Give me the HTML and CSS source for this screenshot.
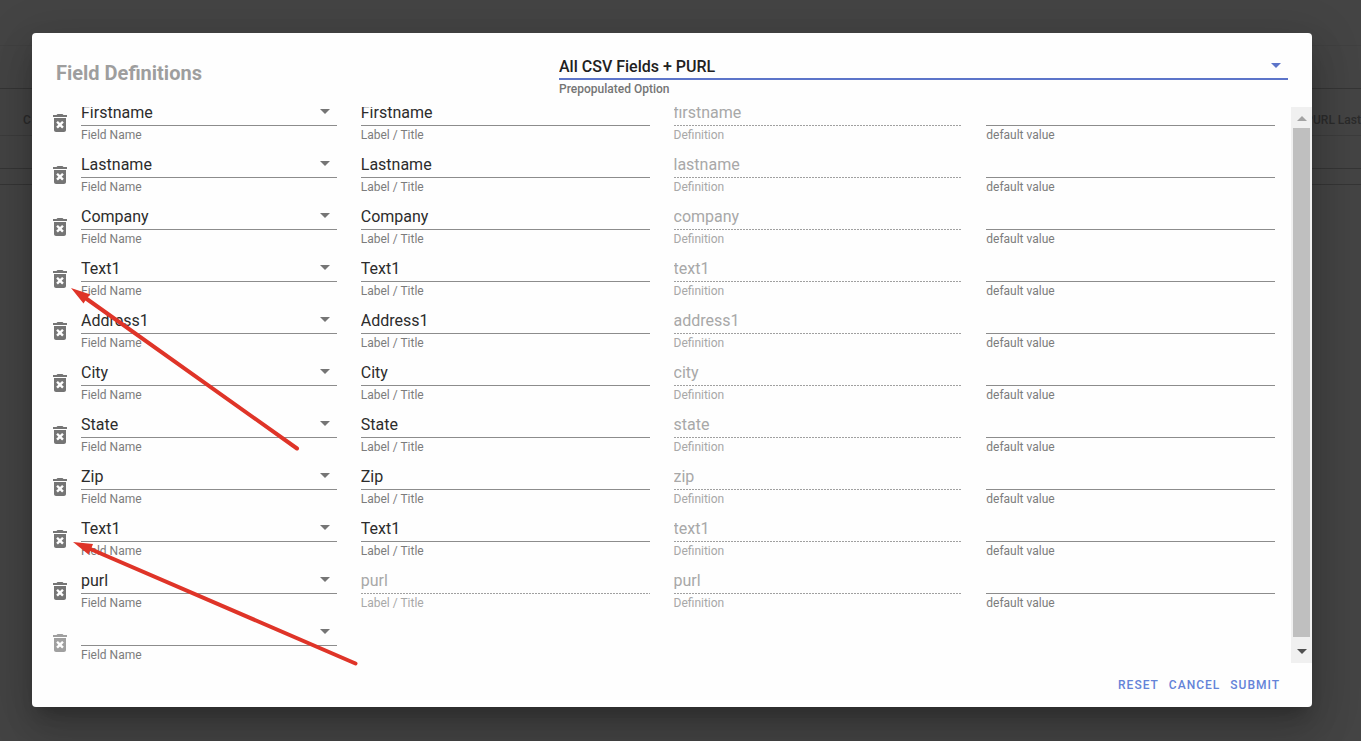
FILE: index.html
```html
<!DOCTYPE html>
<html lang="en">
<head>
    <meta charset="UTF-8">
    <meta name="viewport" content="width=device-width, initial-scale=1.0">
    <title>Field Definitions</title>
    <link rel="stylesheet" href="styles.css">
</head>
<body>
<div class="page">
    <div class="page-bar"></div>
    <div class="page-tabs"></div>
    <div class="page-head"><span>C</span><span>PURL Last</span></div>
    <div class="page-row"></div>
    <div class="page-foot"></div>
</div>

<div class="overlay">
    <form class="dialog" role="dialog" aria-labelledby="dialogTitle">
        <header class="dialog-header">
            <h1 id="dialogTitle">Field Definitions</h1>
            <div class="field field-main">
                <div class="select-wrap">
                    <select id="prepopulated">
                        <option>All CSV Fields + PURL</option>
                    </select>
                    <svg class="caret" viewBox="0 0 10 5"><path d="M0 0h10L5 5z"/></svg>
                </div>
                <label for="prepopulated">Prepopulated Option</label>
            </div>
        </header>

        <div class="dialog-content">
            <div class="rows" id="rows"></div>
            <div class="scrollbar">
                <svg class="scroll-up" viewBox="0 0 10 5"><path d="M0 5h10L5 0z"/></svg>
                <div class="thumb"></div>
                <svg class="scroll-down" viewBox="0 0 10 5"><path d="M0 0h10L5 5z"/></svg>
            </div>
        </div>

        <footer class="dialog-actions">
            <button type="reset">RESET</button>
            <button type="button">CANCEL</button>
            <button type="submit">SUBMIT</button>
        </footer>
    </form>
</div>

<svg class="arrows" width="400" height="700" viewBox="0 0 400 700">
    <path class="shaft" d="M84 297L297 448.500"/>
    <path d="M71 288L90.500 294.500L87 298L83.500 303.500z"/>
    <path class="shaft" d="M88 548L355.500 663.500"/>
    <path d="M73 542L93 544L91 549L88.500 554.500z"/>
</svg>

<script>
    const fields = [
        { name: 'Firstname', definition: 'firstname' },
        { name: 'Lastname', definition: 'lastname' },
        { name: 'Company', definition: 'company' },
        { name: 'Text1', definition: 'text1' },
        { name: 'Address1', definition: 'address1' },
        { name: 'City', definition: 'city' },
        { name: 'State', definition: 'state' },
        { name: 'Zip', definition: 'zip' },
        { name: 'Text1', definition: 'text1' },
        { name: 'purl', definition: 'purl', locked: true },
        { name: '' }
    ];

    function textField(id, value, label, disabled) {
        return `<div class="field">
            <input type="text" id="${id}" value="${value}" ${disabled ? 'disabled' : ''}>
            <label for="${id}">${label}</label>
        </div>`;
    }

    document.getElementById('rows').innerHTML = fields.map((field, i) => `
        <div class="row">
            <button type="button" class="delete" aria-label="Delete" ${field.name ? '' : 'disabled'}>
                <svg viewBox="0 0 24 24"><path d="M6 19c0 1.100.9 2 2 2h8c1.100 0 2-.9 2-2V7H6v12zM8.200 11.600l1.700-1.700L12 12l2.100-2.100 1.700 1.700L13.700 13.700l2.100 2.100-1.700 1.700L12 15.400l-2.100 2.100-1.700-1.700 2.100-2.100zM15.500 4l-1-1h-5l-1 1H5v2h14V4z"/></svg>
            </button>
            <div class="row-fields">
                <div class="field">
                    <div class="select-wrap">
                        <select id="name${i}"><option>${field.name}</option></select>
                        <svg class="caret" viewBox="0 0 10 5"><path d="M0 0h10L5 5z"/></svg>
                    </div>
                    <label for="name${i}">Field Name</label>
                </div>
                ${field.name ? textField('label' + i, field.name, 'Label / Title', field.locked)
                    + textField('definition' + i, field.definition, 'Definition', true)
                    + textField('default' + i, '', 'default value', false) : ''}
            </div>
        </div>`).join('');
</script>
</body>
</html>
```
FILE: styles.css
```css
* {
    box-sizing: border-box;
}
body {
    margin: 0;
    height: 100vh;
    overflow: hidden;
    background-color: #444;
    font-family: Roboto, "Liberation Sans", sans-serif;
}

/* Dimmed page behind the dialog */
.page {
    position: absolute;
    inset: 0;
    overflow: hidden;
    color: #2b2b2b;
    font-size: 12px;
    font-weight: 500;
}
.page-bar {
    height: 46px;
    border-bottom: 1px solid #404040;
}
.page-tabs {
    height: 43px;
    border-bottom: 1px solid #353535;
}
.page-head {
    display: flex;
    justify-content: space-between;
    align-items: center;
    height: 47px;
    padding: 16px 0 0 23px;
    border-bottom: 1px solid #3c3c3c;
}
.page-row {
    height: 33px;
    border-bottom: 1px solid #353535;
}
.page-foot {
    height: 16px;
    border-bottom: 1px solid #353535;
}

.overlay {
    position: relative;
    display: flex;
    height: 100vh;
    padding: 33px 49px 34px 32px;
}
.dialog {
    display: flex;
    flex-direction: column;
    flex: 1;
    background: #fefefe;
    border-radius: 4px;
    box-shadow: 0 11px 15px -7px rgba(0, 0, 0, 0.2), 0 24px 38px 3px rgba(0, 0, 0, 0.14), 0 9px 46px 8px rgba(0, 0, 0, 0.12);
}
.dialog-header {
    display: grid;
    grid-template-columns: 503fr 729fr;
    padding: 20px 24px 10px;
}
h1 {
    margin: 0;
    color: #9e9e9e;
    font-size: 20px;
    line-height: 40px;
}

/* Fields */
.field {
    min-width: 0;
}
.field label {
    display: block;
    padding-top: 2px;
    color: #7c7c7c;
    font-size: 12px;
    line-height: 15px;
}
.field input,
.field select {
    display: block;
    width: 100%;
    height: 27px;
    margin: 0;
    padding: 0;
    border: none;
    border-bottom: 1px solid #8c8c8c;
    border-radius: 0;
    outline: none;
    appearance: none;
    background: transparent;
    color: #2c2c2c;
    font-family: inherit;
    font-size: 16px;
}
.field input:disabled {
    padding-bottom: 1px;
    border-bottom: none;
    background: repeating-linear-gradient(to right, #a0a0a0 0 2px, transparent 2px 3px) left bottom / 100% 1px no-repeat;
    color: #a8a8a8;
}
.field input:disabled + label {
    color: #a8a8a8;
}
.select-wrap {
    position: relative;
}
.caret {
    position: absolute;
    top: 10px;
    right: 7px;
    width: 10px;
    height: 5px;
    fill: #757575;
    pointer-events: none;
}
.field-main select {
    padding-top: 2px;
    border-bottom: 2px solid #5c74c9;
    color: #212121;
    font-weight: 500;
}
.field-main label {
    color: #757575;
    font-weight: 500;
}
.field-main .caret {
    fill: #5c74c9;
}

/* The list is scrolled to its end */
.dialog-content {
    display: flex;
    flex: 1;
    min-height: 0;
    overflow: hidden;
}
.rows {
    display: flex;
    flex-direction: column;
    justify-content: flex-end;
    flex: 1;
    padding: 0 16px;
}
.row {
    display: flex;
    flex-shrink: 0;
    gap: 9px;
    padding-top: 8px;
}
.row-fields {
    display: grid;
    grid-template-columns: 256fr 289fr 289fr 289fr;
    column-gap: 24px;
    flex: 1;
}
.delete {
    width: 24px;
    height: 24px;
    margin-top: 12px;
    padding: 0;
    border: none;
    background: none;
    cursor: pointer;
}
.delete svg {
    display: block;
    fill: #757575;
}
.delete:disabled svg {
    fill: #a0a0a0;
}

.scrollbar {
    display: flex;
    flex-direction: column;
    align-items: center;
    width: 21px;
    background: #f0f0f0;
}
.scrollbar svg {
    width: 10px;
    height: 5px;
}
.scroll-up {
    margin: 9px 0 7px;
    fill: #a3a3a3;
}
.scroll-down {
    margin: 12px 0 9px;
    fill: #505050;
}
.thumb {
    flex: 1;
    width: 17px;
    background: #bfbfbf;
}

.dialog-actions {
    display: flex;
    justify-content: flex-end;
    gap: 10px;
    height: 44px;
    padding-right: 32px;
}
.dialog-actions button {
    padding: 0;
    border: none;
    background: none;
    color: #6483d8;
    font-family: inherit;
    font-size: 12px;
    font-weight: 500;
    letter-spacing: 1px;
    cursor: pointer;
}

/* Callouts over the delete buttons */
.arrows {
    position: absolute;
    top: 0;
    left: 0;
    fill: #df3428;
    pointer-events: none;
}
.arrows .shaft {
    fill: none;
    stroke: #df3428;
    stroke-width: 4px;
    stroke-linecap: round;
}
```
